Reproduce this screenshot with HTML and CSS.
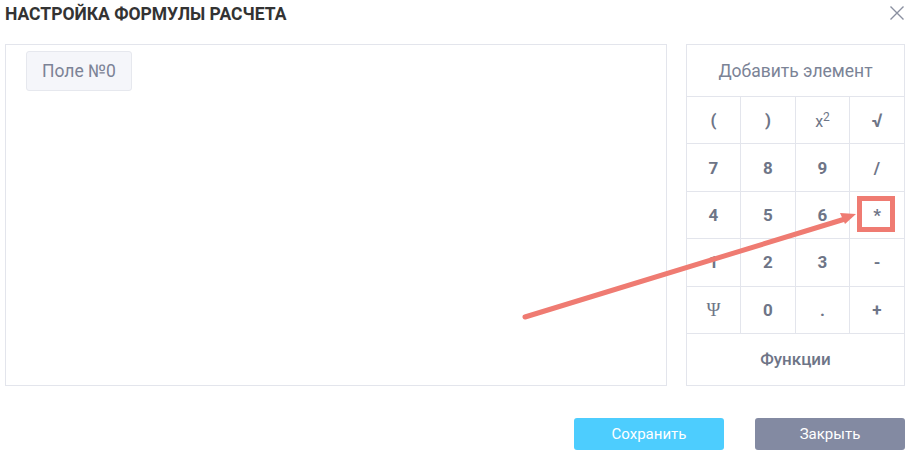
FILE: index.html
```html
<!DOCTYPE html>
<html lang="ru">
<head>
<meta charset="utf-8">
<title>Настройка формулы расчета</title>
<link rel="stylesheet" href="styles.css">
</head>
<body>
<div class="dialog">
  <header class="dlg-head">
    <h1 class="dlg-title">НАСТРОЙКА ФОРМУЛЫ РАСЧЕТА</h1>
    <button class="dlg-close" aria-label="Закрыть">
      <svg width="16" height="16" viewBox="0 0 16 16"><path d="M1.5 1.5 L14.5 14.5 M14.5 1.5 L1.5 14.5" stroke="#8a90a0" stroke-width="1.4" fill="none"/></svg>
    </button>
  </header>
  <div class="dlg-body">
    <div class="formula">
      <span class="chip">Поле №0</span>
    </div>
    <div class="keypad">
      <div class="kp-title">Добавить элемент</div>
      <div class="kp-grid">
        <button class="key">(</button>
        <button class="key">)</button>
        <button class="key key-light">x<sup>2</sup></button>
        <button class="key key-sqrt">√</button>
        <button class="key">7</button>
        <button class="key">8</button>
        <button class="key">9</button>
        <button class="key">/</button>
        <button class="key">4</button>
        <button class="key">5</button>
        <button class="key">6</button>
        <button class="key">*</button>
        <button class="key">1</button>
        <button class="key">2</button>
        <button class="key">3</button>
        <button class="key">-</button>
        <button class="key key-psi">Ψ</button>
        <button class="key">0</button>
        <button class="key">.</button>
        <button class="key">+</button>
      </div>
      <div class="kp-func">Функции</div>
    </div>
  </div>
  <footer class="dlg-foot">
    <button class="btn btn-save">Сохранить</button>
    <button class="btn btn-close">Закрыть</button>
  </footer>
  <svg class="annot" width="910" height="452" viewBox="0 0 910 452">
    <rect x="859.5" y="198.5" width="33" height="31" fill="none" stroke="#ef7b72" stroke-width="5"/>
    <path d="M525 317 L845 219" stroke="#ef7b72" stroke-width="5" stroke-linecap="round" fill="none"/>
    <path d="M856 214 L840 213 L845 224 Z" fill="#ef7b72"/>
  </svg>
</div>
</body>
</html>
```
FILE: styles.css
```css
* { box-sizing: border-box; }
html, body { margin: 0; padding: 0; background: #fff; }
body { font-family: Roboto, "Noto Sans", "Liberation Sans", sans-serif; }

.dialog {
  position: relative;
  width: 910px;
  height: 452px;
  padding: 0 5px;
}

.dlg-head {
  height: 44px;
  display: flex;
  justify-content: space-between;
  align-items: flex-start;
}
.dlg-title {
  margin: 4px 0 0 0;
  font-size: 17.5px;
  font-weight: 700;
  color: #333;
  letter-spacing: 0;
}
.dlg-close {
  margin: 5px 0 0 0;
  padding: 0;
  border: 0;
  background: none;
  width: 16px;
  height: 16px;
  display: flex;
}

.dlg-body {
  display: flex;
  gap: 19px;
  height: 342px;
}

.formula {
  width: 662px;
  border: 1px solid #e3e5ec;
  padding: 6px 20px;
}
.chip {
  display: inline-flex;
  align-items: center;
  justify-content: center;
  width: 106px;
  height: 40px;
  background: #f5f6fa;
  border: 1px solid #e6e8ee;
  border-radius: 3px;
  color: #7c8396;
  font-size: 17.5px;
}

.keypad {
  width: 219px;
  border: 1px solid #e3e5ec;
  display: flex;
  flex-direction: column;
}
.kp-title {
  height: 52px;
  display: flex;
  align-items: center;
  justify-content: center;
  border-bottom: 1px solid #e3e5ec;
  color: #7b8396;
  font-size: 17.5px;
}
.kp-grid {
  display: grid;
  grid-template-columns: 54px 55px 54px 54px;
  grid-auto-rows: 47.4px;
}
.key {
  border: 0;
  border-right: 1px solid #e3e5ec;
  border-bottom: 1px solid #e3e5ec;
  background: #fff;
  color: #6e7587;
  font-family: inherit;
  font-size: 17px;
  font-weight: 700;
  padding: 0;
}
.key:nth-child(4n) { border-right: 0; }
.key-light { font-weight: 400; font-size: 16px; }
.key-light sup { font-size: 12px; }
.key-sqrt { font-size: 19px; }
.key-psi { font-family: "Liberation Serif", "DejaVu Serif", serif; font-weight: 400; font-size: 19px; }

.kp-func {
  flex: 1;
  display: flex;
  align-items: center;
  justify-content: center;
  color: #6e7587;
  font-size: 17px;
  font-weight: 500;
}

.dlg-foot {
  display: flex;
  justify-content: flex-end;
  gap: 31px;
  margin-top: 32px;
}
.btn {
  width: 150px;
  height: 32px;
  border: 0;
  border-radius: 3px;
  color: #fff;
  font-family: inherit;
  font-size: 15px;
}
.btn-save { background: #4dcdfe; }
.btn-close { background: #838aa2; }

.annot {
  position: absolute;
  left: 0;
  top: 0;
  pointer-events: none;
}
```
